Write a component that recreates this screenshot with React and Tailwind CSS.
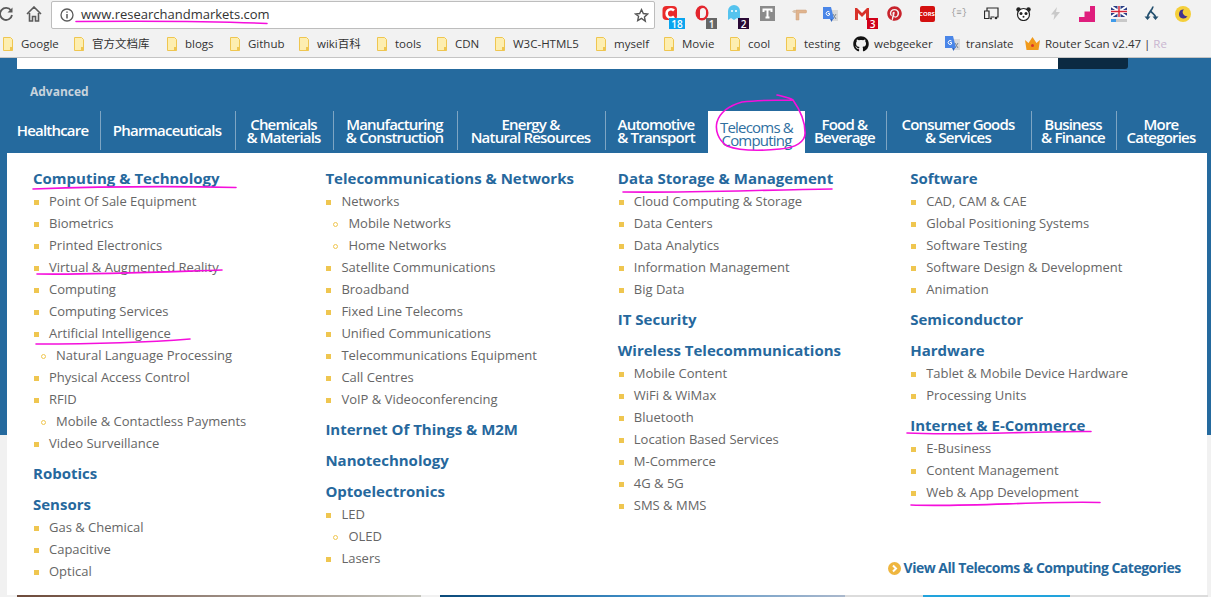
import React from 'react';
import { FaGithub, FaPinterest } from 'react-icons/fa';

const navItems = [
  { w: 'w-[93px]', lines: ['Healthcare'] },
  { w: 'w-[135px]', lines: ['Pharmaceuticals'] },
  { w: 'w-[98px]', lines: ['Chemicals', '& Materials'] },
  { w: 'w-[124px]', lines: ['Manufacturing', '& Construction'] },
  { w: 'w-[148px]', lines: ['Energy &', 'Natural Resources'] },
  { w: 'w-[103px]', lines: ['Automotive', '& Transport'] },
  { w: 'w-[97px]', lines: ['Telecoms &', 'Computing'], active: true },
  { w: 'w-[81px]', lines: ['Food &', 'Beverage'] },
  { w: 'w-[145px]', lines: ['Consumer Goods', '& Services'] },
  { w: 'w-[85px]', lines: ['Business', '& Finance'] },
  { w: 'w-[91px]', lines: ['More', 'Categories'] },
];

// sub: true marks the indented entries with a hollow bullet
const columns = [
  [
    {
      title: 'Computing & Technology',
      items: [
        { t: 'Point Of Sale Equipment' },
        { t: 'Biometrics' },
        { t: 'Printed Electronics' },
        { t: 'Virtual & Augmented Reality' },
        { t: 'Computing' },
        { t: 'Computing Services' },
        { t: 'Artificial Intelligence' },
        { t: 'Natural Language Processing', sub: true },
        { t: 'Physical Access Control' },
        { t: 'RFID' },
        { t: 'Mobile & Contactless Payments', sub: true },
        { t: 'Video Surveillance' },
      ],
    },
    { title: 'Robotics', items: [] },
    {
      title: 'Sensors',
      items: [{ t: 'Gas & Chemical' }, { t: 'Capacitive' }, { t: 'Optical' }],
    },
  ],
  [
    {
      title: 'Telecommunications & Networks',
      items: [
        { t: 'Networks' },
        { t: 'Mobile Networks', sub: true },
        { t: 'Home Networks', sub: true },
        { t: 'Satellite Communications' },
        { t: 'Broadband' },
        { t: 'Fixed Line Telecoms' },
        { t: 'Unified Communications' },
        { t: 'Telecommunications Equipment' },
        { t: 'Call Centres' },
        { t: 'VoIP & Videoconferencing' },
      ],
    },
    { title: 'Internet Of Things & M2M', items: [] },
    { title: 'Nanotechnology', items: [] },
    {
      title: 'Optoelectronics',
      items: [{ t: 'LED' }, { t: 'OLED', sub: true }, { t: 'Lasers' }],
    },
  ],
  [
    {
      title: 'Data Storage & Management',
      items: [
        { t: 'Cloud Computing & Storage' },
        { t: 'Data Centers' },
        { t: 'Data Analytics' },
        { t: 'Information Management' },
        { t: 'Big Data' },
      ],
    },
    { title: 'IT Security', items: [] },
    {
      title: 'Wireless Telecommunications',
      items: [
        { t: 'Mobile Content' },
        { t: 'WiFi & WiMax' },
        { t: 'Bluetooth' },
        { t: 'Location Based Services' },
        { t: 'M-Commerce' },
        { t: '4G & 5G' },
        { t: 'SMS & MMS' },
      ],
    },
  ],
  [
    {
      title: 'Software',
      items: [
        { t: 'CAD, CAM & CAE' },
        { t: 'Global Positioning Systems' },
        { t: 'Software Testing' },
        { t: 'Software Design & Development' },
        { t: 'Animation' },
      ],
    },
    { title: 'Semiconductor', items: [] },
    {
      title: 'Hardware',
      items: [{ t: 'Tablet & Mobile Device Hardware' }, { t: 'Processing Units' }],
    },
    {
      title: 'Internet & E-Commerce',
      items: [{ t: 'E-Business' }, { t: 'Content Management' }, { t: 'Web & App Development' }],
    },
  ],
];

const folderBookmarks = [
  { label: 'Google', w: 'w-[71px]' },
  { label: '官方文档库', w: 'w-[93px]' },
  { label: 'blogs', w: 'w-[63px]' },
  { label: 'Github', w: 'w-[69px]' },
  { label: 'wiki百科', w: 'w-[78px]' },
  { label: 'tools', w: 'w-[60px]' },
  { label: 'CDN', w: 'w-[58px]' },
  { label: 'W3C-HTML5', w: 'w-[101px]' },
  { label: 'myself', w: 'w-[68px]' },
  { label: 'Movie', w: 'w-[66px]' },
  { label: 'cool', w: 'w-[56px]' },
  { label: 'testing', w: 'w-[68px]' },
];

function Folder() {
  return (
    <svg width="12" height="16" viewBox="0 0 12 16" className="shrink-0">
      <path d="M1.5 1.5h7l2 2v11h-9z" fill="#fdeeb0" stroke="#efc650" strokeWidth="1" />
      <path d="M8 11h2.5v3.5H8z" fill="#efc650" />
    </svg>
  );
}

function TranslateIcon({ size = 16 }) {
  return (
    <svg width={size} height={size} viewBox="0 0 16 16">
      <path d="M6 3h9v11H9z" fill="#dadada" />
      <path d="M10 7l3 5M13 7l-3 5" stroke="#7b8794" strokeWidth="1" />
      <path d="M0 0h8l3 12H0z" fill="#4a86e8" />
      <path d="M6.5 5A2 2 0 1 0 6.5 8V6.5H5" fill="none" stroke="#fff" strokeWidth="1" />
      <path d="M7 12l1.5 3 1.500-3z" fill="#3367c0" />
    </svg>
  );
}

function Badge({ text, className }) {
  return (
    <span className={`absolute top-[18px] h-[11px] flex items-center justify-center text-[10px] leading-none font-semibold text-white ${className}`}>
      {text}
    </span>
  );
}

function ExtensionIcons() {
  return (
    <div className="flex items-center h-[29px] text-[0px]">
      <div className="relative w-8 h-full flex items-center justify-center">
        <svg width="16" height="16" viewBox="0 0 16 16" className="-mt-[3px] -ml-[2px]">
          <rect x="0.500" y="1" width="14.500" height="14" rx="4" fill="#ea2a2a" />
          <path d="M12 5.500A4.300 4.300 0 1 0 12 11.500" fill="none" stroke="#fff" strokeWidth="2.600" />
        </svg>
        <Badge text="18" className="left-[14px] w-4 bg-[#0aa5ef]" />
      </div>
      <div className="relative w-8 h-full flex items-center justify-center">
        <svg width="15" height="16" viewBox="0 0 15 16" className="-mt-[3px] -ml-[2px]">
          <ellipse cx="7" cy="8" rx="6.500" ry="7.500" fill="#e3262e" />
          <path d="M5 13V5.500C5 4 6.500 3 8 3c1.500 0 3 1.500 3 3v3c0 2-1.500 4-3.500 4z" fill="#f4f4f4" />
        </svg>
        <Badge text="1" className="left-[19px] w-[11px] bg-[#666666]" />
      </div>
      <div className="relative w-8 h-full flex items-center justify-center">
        <svg width="12" height="16" viewBox="0 0 12 16" className="-mt-[3px] -ml-[2px]">
          <path d="M0 15V6a6 6 0 0 1 12 0v9l-3-2-3 2-3-2z" fill="#55c3ee" />
          <circle cx="4" cy="6" r="1" fill="#fff" />
          <circle cx="8" cy="6" r="1" fill="#fff" />
        </svg>
        <Badge text="2" className="left-[19px] w-[11px] bg-[#2a0a36]" />
      </div>
      <div className="w-8 h-full flex items-center justify-center">
        <svg width="15" height="15" viewBox="0 0 15 15" className="-mt-[2px]">
          <rect width="15" height="15" fill="#8b8b8b" />
          <path d="M3.500 6V3.500h8V6M7.500 3.500V11.500M5.500 11.500h4" fill="none" stroke="#fff" strokeWidth="2" />
        </svg>
      </div>
      <div className="w-8 h-full flex items-center justify-center">
        <svg width="15" height="15" viewBox="0 0 15 15" className="-mt-[2px]">
          <path d="M4 4h10l1 1.500-1 1.500H7v7H4z" fill="#e0b48e" stroke="#cfa27c" strokeWidth="0.500" />
          <path d="M0 5.500L2 4h2v3H2z" fill="#d9c2ac" />
        </svg>
      </div>
      <div className="w-8 h-full flex items-center justify-center">
        <TranslateIcon />
      </div>
      <div className="relative w-8 h-full flex items-center justify-center">
        <svg width="16" height="13" viewBox="0 0 16 13" className="-mt-[3px] -ml-[2px]">
          <rect width="16" height="13" fill="#f7f7f7" stroke="#dddddd" strokeWidth="0.500" />
          <path d="M1 13V1h2l5 5 5-5h2v12h-3V6L8 10 4 6v7z" fill="#d8322a" />
        </svg>
        <Badge text="3" className="left-[20px] w-[11px] h-[11px] bg-[#d10019]" />
      </div>
      <div className="w-8 h-full flex items-center justify-center">
        <FaPinterest className="text-[15px] text-[#c8232c] -mt-[2px] -ml-[1px]" />
      </div>
      <div className="w-8 h-full flex items-center justify-center">
        <span className="flex items-center justify-center w-[15px] h-[16px] -mt-[2px] rounded-[2px] bg-[#d4100f] text-white text-[6px] font-bold leading-none">
          CORS
        </span>
      </div>
      <div className="w-8 h-full flex items-center justify-center">
        <span className="-mt-[2px] text-[9px] leading-none text-[#999999] font-['Liberation_Mono',monospace]">{'{≡}'}</span>
      </div>
      <div className="w-8 h-full flex items-center justify-center">
        <svg width="15" height="13" viewBox="0 0 15 13" className="-mt-[2px]">
          <path d="M3 3.500V1h11v9h-1.500M0.500 4h4.500v7.500H0.500zM6.500 10h4" fill="none" stroke="#2b2b2b" strokeWidth="1.200" />
          <circle cx="12" cy="11" r="1.300" fill="#2b2b2b" />
          <circle cx="7" cy="11.500" r="1" fill="#2b2b2b" />
        </svg>
      </div>
      <div className="w-8 h-full flex items-center justify-center">
        <svg width="15" height="14" viewBox="0 0 15 14" className="-mt-[2px]">
          <circle cx="2.500" cy="2.500" r="2.200" fill="#222" />
          <circle cx="12.500" cy="2.500" r="2.200" fill="#222" />
          <circle cx="7.500" cy="7.500" r="6" fill="#fff" stroke="#222" strokeWidth="1.200" />
          <circle cx="5" cy="6.500" r="1.500" fill="#222" />
          <circle cx="10" cy="6.500" r="1.500" fill="#222" />
          <circle cx="7.500" cy="9.800" r="1" fill="#222" />
        </svg>
      </div>
      <div className="w-8 h-full flex items-center justify-center">
        <svg width="9" height="13" viewBox="0 0 9 13" className="-mt-[2px]">
          <path d="M6 0L0 7.500h3.500L2.500 13 9 5H5z" fill="#c9c9c9" />
        </svg>
      </div>
      <div className="w-8 h-full flex items-center justify-center">
        <svg width="16" height="16" viewBox="0 0 16 16" className="-mt-[2px]">
          <path d="M11 0h5v16H0v-5h5.500V5.500H11z" fill="#df1e7d" />
        </svg>
      </div>
      <div className="w-8 h-full flex flex-col items-center justify-center">
        <svg width="16" height="16" viewBox="0 0 16 16" className="-mt-[2px]">
          <rect width="16" height="11" fill="#2b3f86" />
          <path d="M0 0l16 11M16 0L0 11" stroke="#fff" strokeWidth="2" />
          <path d="M8 0v11M0 5.500h16" stroke="#fff" strokeWidth="3" />
          <path d="M8 0v11M0 5.500h16" stroke="#d6283a" strokeWidth="1.500" />
          <rect y="13" width="16" height="3" fill="#c9c9c9" />
          <rect y="13" width="5" height="3" fill="#3f9bea" />
        </svg>
      </div>
      <div className="w-8 h-full flex items-center justify-center">
        <svg width="15" height="15" viewBox="0 0 15 15" className="-mt-[2px]">
          <path d="M9 0.500C8.500 4 4.500 6 3.500 11M7 5.500C8.500 7.500 11 8.500 11.500 11" fill="none" stroke="#24506f" strokeWidth="1.700" />
          <path d="M0.500 10.500l3 3.500 3-3.500zM8.500 10.500l3 3.500 3-3.500z" fill="#24506f" />
        </svg>
      </div>
      <div className="w-8 h-full flex items-center justify-center">
        <svg width="16" height="16" viewBox="0 0 16 16" className="-mt-[2px]">
          <circle cx="8" cy="8" r="8" fill="#f5cf3a" />
          <path d="M9 3.500a4.500 4.500 0 1 0 3.500 6.500 3.800 3.800 0 0 1-3.500-6.500z" fill="#43338f" />
        </svg>
      </div>
    </div>
  );
}

function BrowserChrome() {
  return (
    <div className="shrink-0 bg-[#f2f2f2] border-b border-[#c4c4c4] font-['Open_Sans','Noto_Sans_CJK_SC',sans-serif]">
      <div className="flex h-[29px]">
        <div className="flex items-center w-[52px] shrink-0 -ml-[1px]">
          <svg width="14" height="14" viewBox="0 0 14 14" className="-mt-[1px]">
            <path d="M12 3.500A6 6 0 1 0 13 8" fill="none" stroke="#5a5a5a" strokeWidth="1.800" />
            <path d="M13.500 0.500v5h-5z" fill="#5a5a5a" />
          </svg>
          <svg width="16" height="16" viewBox="0 0 16 16" className="ml-[13px] -mt-[1px]">
            <path d="M1 8l7-7 7 7M3.500 7v8h3v-4.500h3V15h3V7" fill="none" stroke="#5a5a5a" strokeWidth="1.600" />
          </svg>
        </div>
        <div className="flex items-center w-[604px] shrink-0 mt-[1px] bg-white border border-[#bdbdbd] rounded-[2px] pl-[8px] pr-[5px]">
          <svg width="14" height="14" viewBox="0 0 14 14">
            <circle cx="7" cy="7" r="6" fill="none" stroke="#5a5a5a" strokeWidth="1.300" />
            <path d="M7 6v4.500M7 3.500v1.300" stroke="#5a5a5a" strokeWidth="1.500" />
          </svg>
          <span className="ml-[7px] flex-1 text-[13px] text-[#333333]">www.researchandmarkets.com</span>
          <svg width="15" height="15" viewBox="0 0 24 24">
            <path d="M12 2.500l2.900 6.300 6.900.8-5.100 4.700 1.400 6.800L12 16.700l-6.100 3.400 1.400-6.800L2.200 9.600l6.900-.8z" fill="none" stroke="#555" strokeWidth="2.200" />
          </svg>
        </div>
        <ExtensionIcons />
      </div>
      <div className="flex items-center h-[28px] pl-[2px] pt-px text-[11.500px] text-[#333333]">
        {folderBookmarks.map((b) => (
          <div key={b.label} className={`flex items-center gap-[7px] shrink-0 ${b.w}`}>
            <Folder />
            <span className="whitespace-nowrap">{b.label}</span>
          </div>
        ))}
        <div className="flex items-center gap-[5px] shrink-0 w-[92px]">
          <FaGithub className="text-[16px] text-[#111111] shrink-0" />
          <span>webgeeker</span>
        </div>
        <div className="flex items-center gap-[5px] shrink-0 w-[79px]">
          <TranslateIcon />
          <span>translate</span>
        </div>
        <div className="flex items-center gap-[4px] shrink-0">
          <svg width="17" height="14" viewBox="0 0 17 14" className="shrink-0">
            <path d="M1 3l3.500 3L8.500 0l4 6L16 3l-1.500 10h-12z" fill="#f19a1b" />
            <circle cx="8.500" cy="8.500" r="1.500" fill="#d9342b" />
          </svg>
          <span className="whitespace-nowrap">Router Scan v2.47 | <span className="text-[#c9b5d0]">Re</span></span>
        </div>
      </div>
    </div>
  );
}

function MenuItem({ item }) {
  if (item.sub) {
    return (
      <li className="flex items-center h-[22px] pt-[2px] pl-[8px] whitespace-nowrap">
        <span className="w-[5px] h-[5px] rounded-full border border-[#efc650] mr-[10px]" />
        {item.t}
      </li>
    );
  }
  return (
    <li className="flex items-center h-[22px] pt-[2px] pl-[1px] whitespace-nowrap">
      <span className="w-[5px] h-[5px] bg-[#efc650] mr-[10px]" />
      {item.t}
    </li>
  );
}

function MenuGroup({ group }) {
  return (
    <div className="mb-[8px]">
      <h4 className="h-[22px] mb-px text-[15px] leading-[22px] font-bold text-[#26689d] whitespace-nowrap">{group.title}</h4>
      <ul className="text-[13px] text-[#666666]">
        {group.items.map((item) => (
          <MenuItem key={item.t} item={item} />
        ))}
      </ul>
    </div>
  );
}

function MegaMenu() {
  return (
    <div className="absolute top-full left-0 w-[1200px] h-[442px] bg-white pt-[14px] pl-[26px] pr-[4.400px] grid grid-cols-4 content-start">
      {columns.map((col, i) => (
        <div key={i} className="flex flex-col min-w-0">
          {col.map((group) => (
            <MenuGroup key={group.title} group={group} />
          ))}
          {i === 3 && (
            <a className="mt-auto mb-[12px] self-end mr-[22px] flex items-center gap-[3px] whitespace-nowrap text-[14px] leading-[20px] font-bold tracking-[-0.5px] text-[#26689d]">
              <svg width="13" height="13" viewBox="0 0 13 13" className="shrink-0">
                <circle cx="6.500" cy="6.500" r="6.500" fill="#efb63f" />
                <path d="M5 3.500l3 3-3 3" fill="none" stroke="#fff" strokeWidth="2" />
              </svg>
              View All Telecoms &amp; Computing Categories
            </a>
          )}
        </div>
      ))}
    </div>
  );
}

function Annotations() {
  return (
    <svg width="1211" height="597" className="absolute inset-0 pointer-events-none" fill="none" stroke="#f50fdc" strokeWidth="1.600" strokeLinecap="round">
      <path d="M76 21.500C130 21 200 20.500 267 23.500" />
      <path d="M33 189C90 187 170 186 236 187.500" />
      <path d="M777 95C785 97 790 98 793 100C800 110 805 122 805 132C806 142 795 148 780 149C760 151 740 151 727 146C718 140 715 130 717 122C720 112 728 106 742 102C760 100 780 100 793 100" />
      <path d="M623 192C680 193 760 190 832 189" />
      <path d="M37 274C90 275 160 272 222 270" />
      <path d="M36 344C90 344 140 343 190 339" />
      <path d="M907 433C960 436 1030 431 1091 431.500" />
      <path d="M911 505C970 507 1040 501 1100 502.500" />
    </svg>
  );
}

export default function App() {
  return (
    <div className="relative w-[1211px] h-[597px] overflow-hidden flex flex-col bg-[#f1f1f1] font-['Open_Sans',sans-serif]">
      <BrowserChrome />
      <div className="flex-1 min-h-0 flex flex-col">
        <div className="h-[377px] shrink-0 bg-[#256a9e]">
          <div className="flex h-[11px] ml-[17px]">
            <div className="w-[1041px] bg-white" />
            <div className="w-[70px] bg-[#0b2a42] rounded-br-[3px]" />
          </div>
          <div className="pl-[30px] pt-[15px] h-[42px] text-[12px] leading-[16px] font-bold text-[#c8d3dc]">Advanced</div>
          <nav className="relative flex ml-[7px] w-[1200px] h-[42px] items-end">
            {navItems.map((n, i) => {
              const prevActive = i > 0 && navItems[i - 1].active;
              if (n.active) {
                return (
                  <div key={n.w + i} className={`${n.w} h-[42px] shrink-0 flex flex-col items-center justify-center pt-[3px] bg-white text-[#2f6f9f] text-[15px] leading-[13px] tracking-[-0.8px]`}>
                    {n.lines.map((l) => (
                      <span key={l}>{l}</span>
                    ))}
                  </div>
                );
              }
              return (
                <div key={n.w + i} className={`${n.w} h-[39px] mb-[3px] pr-[2px] shrink-0 flex flex-col items-center justify-center text-white text-[15px] leading-[13px] font-semibold tracking-[-0.8px] ${i === 0 || prevActive ? '' : 'border-l border-[#7ea5c3]'}`}>
                  {n.lines.map((l) => (
                    <span key={l} className="whitespace-nowrap">{l}</span>
                  ))}
                </div>
              );
            })}
            <MegaMenu />
          </nav>
        </div>
        <div className="flex-1 flex items-end pl-[17px]">
          <div className="w-[404px] h-[2px] bg-gradient-to-r from-[#6d4a3a] via-[#9a8a80] to-[#c4c4bc]" />
          <div className="ml-[19px] w-[405px] h-[2px] bg-gradient-to-r from-[#0a4a7a] via-[#3f8fc8] to-[#aab8cc]" />
          <div className="flex-1 h-[2px] mr-[3px] bg-[#dcdcdc] pl-[78px]">
            <div className="w-[147px] h-[2px] bg-[#22a3dc]" />
          </div>
        </div>
      </div>
      <Annotations />
    </div>
  );
}
